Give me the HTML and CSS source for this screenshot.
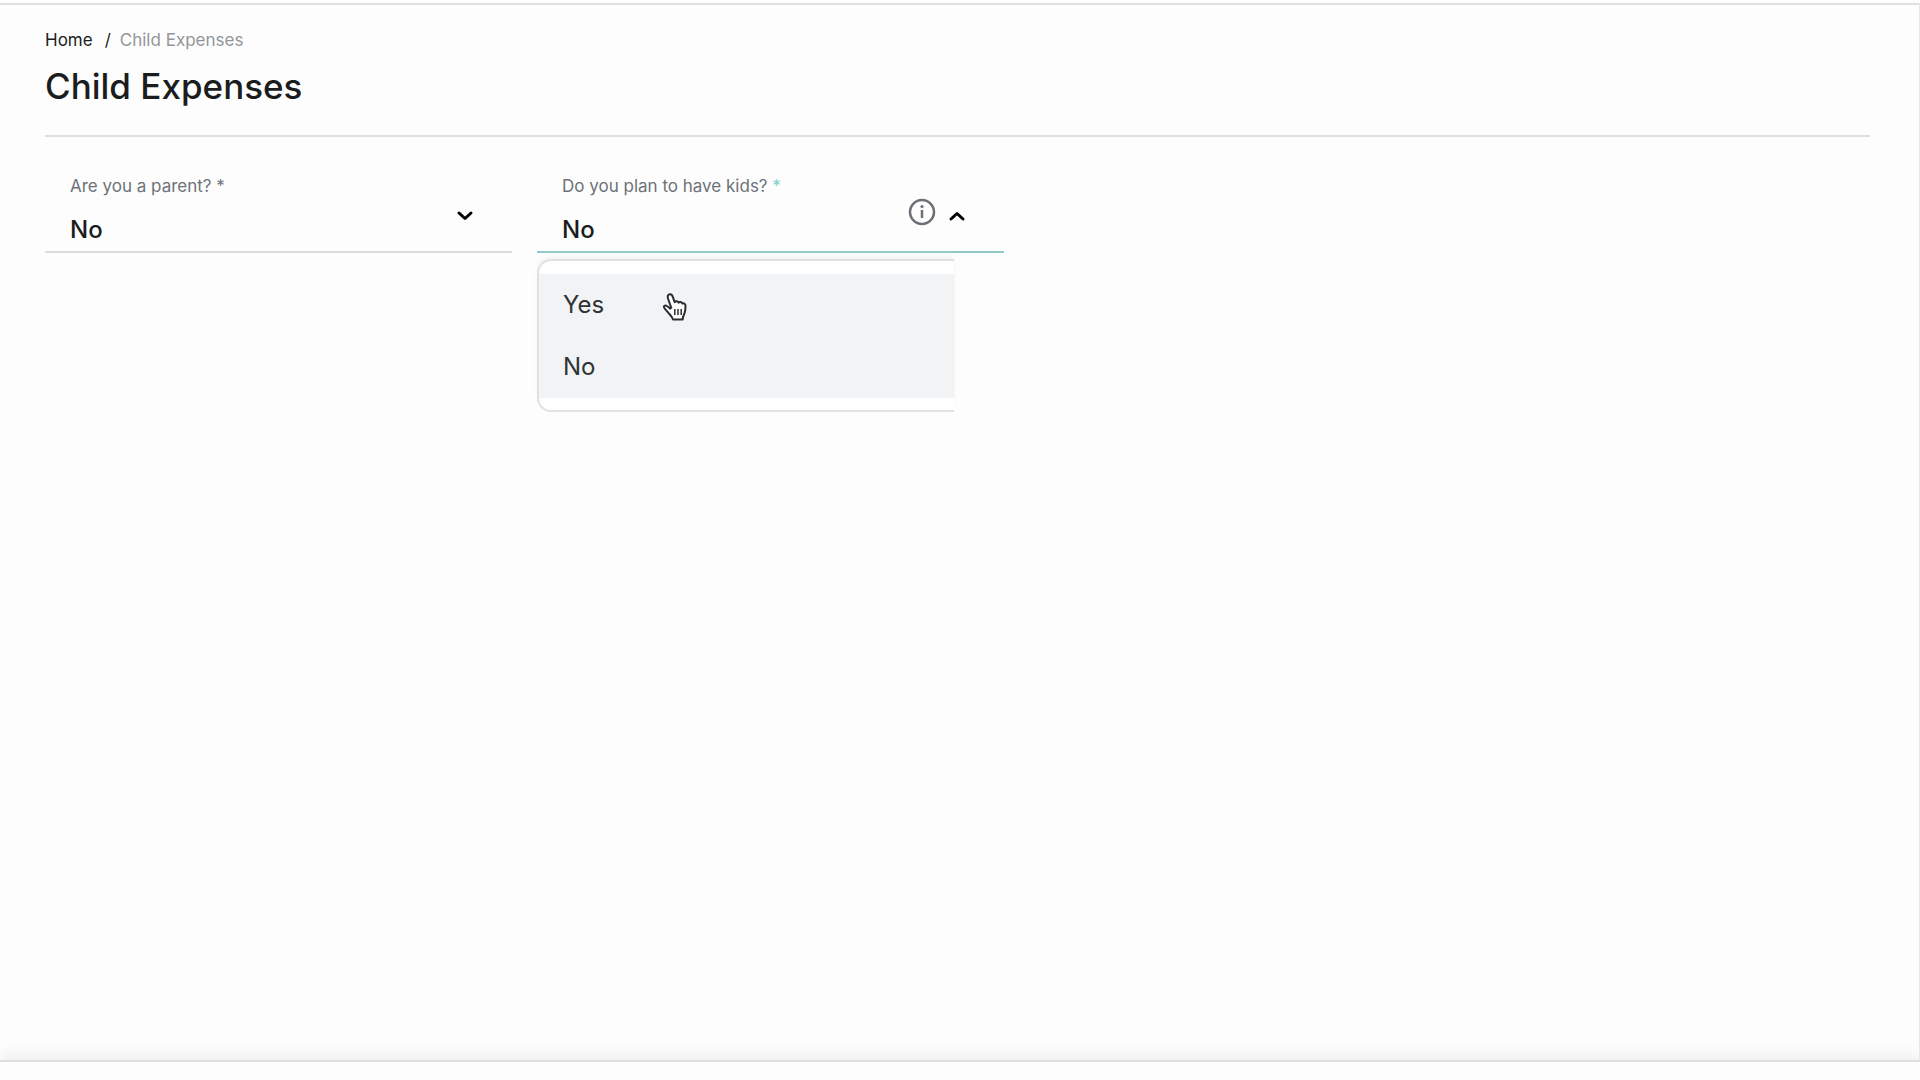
FILE: index.html
```
<!DOCTYPE html>
<html lang="en">
<head>
    <meta charset="UTF-8">
    <title>Child Expenses</title>
    <link rel="stylesheet" href="styles.css">
</head>
<body>
    <main class="content">
        <header class="page-header">
            <nav class="breadcrumb" aria-label="Breadcrumb">
                <a href="#">Home</a>
                <span class="slash">/</span>
                <span class="current">Child Expenses</span>
            </nav>
            <h1>Child Expenses</h1>
        </header>

        <form class="fields">
            <div class="field">
                <div class="field-text">
                    <label for="parent">Are you a parent? <span>*</span></label>
                    <select id="parent">
                        <option>Yes</option>
                        <option selected>No</option>
                    </select>
                </div>
                <svg class="chevron" viewBox="0 0 18 12" aria-hidden="true"><path d="M3 3l6 5.500L15 3"/></svg>
            </div>

            <div class="field open">
                <div class="field-text">
                    <label for="kids">Do you plan to have kids? <span class="star">*</span></label>
                    <select id="kids">
                        <option>Yes</option>
                        <option selected>No</option>
                    </select>
                </div>
                <button type="button" class="info" aria-label="More information">
                    <svg viewBox="0 0 28 28"><circle cx="14" cy="14" r="12"/><path d="M14 12v8"/><circle class="dot" cx="14" cy="8.500" r="1.600"/></svg>
                </button>
                <svg class="chevron" viewBox="0 0 18 12" aria-hidden="true"><path d="M3 9l6-5.500L15 9"/></svg>

                <ul class="menu" role="listbox" aria-label="Do you plan to have kids?">
                    <li role="option" aria-selected="false">Yes
                        <svg class="pointer" viewBox="0 0 26 30" aria-hidden="true">
                            <path class="hand" d="M9.500 15.500L6 5.500C5.300 3.400 6 1.600 7.600 1.300c1.600-.3 2.600.8 3.200 2.500l1.900 5.300c1-1.400 3.400-1.100 3.900.6 1-1.100 3.200-.8 3.600.9 1.300-.9 3.300 0 3.300 2 0 4.200-.2 6.400-1.500 8.900-.9 1.700-1.300 2.900-1.300 5H11c-.8-2.700-2.400-4.200-4.200-6.200-1.500-1.700-3.100-3.400-4.400-5.300-1.300-2 .8-3.300 2.500-2 1.700 1.100 2.900 2.200 4 3.300"/>
                            <path class="lines" d="M12.800 16v6M16 16v6M19.200 16v6"/>
                        </svg>
                    </li>
                    <li role="option" aria-selected="true">No</li>
                </ul>
            </div>
        </form>
    </main>
    <footer class="bottom-bar"></footer>
</body>
</html>
```

FILE: styles.css
```
* {
    margin: 0;
    padding: 0;
    box-sizing: border-box;
}

body {
    display: flex;
    flex-direction: column;
    min-height: 100vh;
    padding-top: 3px;
    background-color: #fdfdfd;
    font-family: Inter, "Liberation Sans", sans-serif;
    color: #1b1c1e;
}

.content {
    flex: 1;
    padding: 24px 49px 24px 45px;
    border-top: 2px solid #e0e0e0;
    border-right: 1px solid #e6e6e6;
}

.page-header {
    padding-bottom: 25px;
    border-bottom: 2px solid #dedede;
}

.breadcrumb {
    display: flex;
    gap: 9px;
    font-size: 17px;
    line-height: 22px;
}

.breadcrumb a {
    color: inherit;
    text-decoration: none;
}

.slash {
    padding-left: 3px;
}

.current {
    color: #92969a;
}

h1 {
    margin-top: 11px;
    font-size: 35px;
    font-weight: 500;
    line-height: 48px;
}

.fields {
    display: grid;
    grid-template-columns: repeat(2, minmax(0, 467px));
    gap: 25px;
    margin-top: 36px;
}

.field {
    position: relative;
    display: flex;
    align-items: center;
    gap: 12px;
    padding: 0 38px 0 25px;
    border-bottom: 2px solid #dcdcdc;
}

.field.open {
    border-color: #8fcac8;
}

.field-text {
    display: flex;
    flex: 1;
    flex-direction: column;
    gap: 14px;
    padding-bottom: 6px;
}

label {
    font-size: 17px;
    line-height: 26px;
    color: #6c7278;
}

.star {
    color: #7fd0c4;
}

select {
    appearance: none;
    width: 100%;
    height: 32px;
    border: none;
    outline: none;
    background: none;
    font-family: inherit;
    font-size: 24px;
    font-weight: 500;
    color: #1b1c1e;
}

.chevron {
    width: 18px;
    height: 12px;
    margin-top: 8px;
    fill: none;
    stroke: #000;
    stroke-width: 3;
    stroke-linecap: round;
    stroke-linejoin: round;
}

.info {
    width: 28px;
    height: 28px;
    border: none;
    background: none;
}

.info svg {
    display: block;
    fill: none;
    stroke: #6a7076;
    stroke-width: 2.5;
}

.info .dot {
    fill: #6a7076;
    stroke: none;
}

/* opened list under the field */
.menu {
    position: absolute;
    top: 100%;
    left: 0;
    width: 417px;
    margin-top: 8px;
    padding: 13px 0 12px;
    border: 2px solid #e0e1e1;
    border-right: none;
    border-radius: 14px 0 0 14px;
    background-color: #fefefe;
    box-shadow: 0 -4px 6px -2px #f0f1f1;
    list-style: none;
}

.menu li {
    position: relative;
    padding: 0 24px;
    background-color: #f1f3f4;
    font-size: 24px;
    line-height: 62px;
    color: #303234;
}

.pointer {
    position: absolute;
    top: 19px;
    left: 123px;
    width: 26px;
    height: 30px;
}

.hand {
    fill: #fff;
    stroke: #2b2c2e;
    stroke-width: 2;
    stroke-linejoin: round;
}

.lines {
    fill: none;
    stroke: #2b2c2e;
    stroke-width: 1.5;
}

.bottom-bar {
    height: 20px;
    border-top: 2px solid #dfdfdf;
    box-shadow: 0 -6px 14px #f0f0f0;
}
```
